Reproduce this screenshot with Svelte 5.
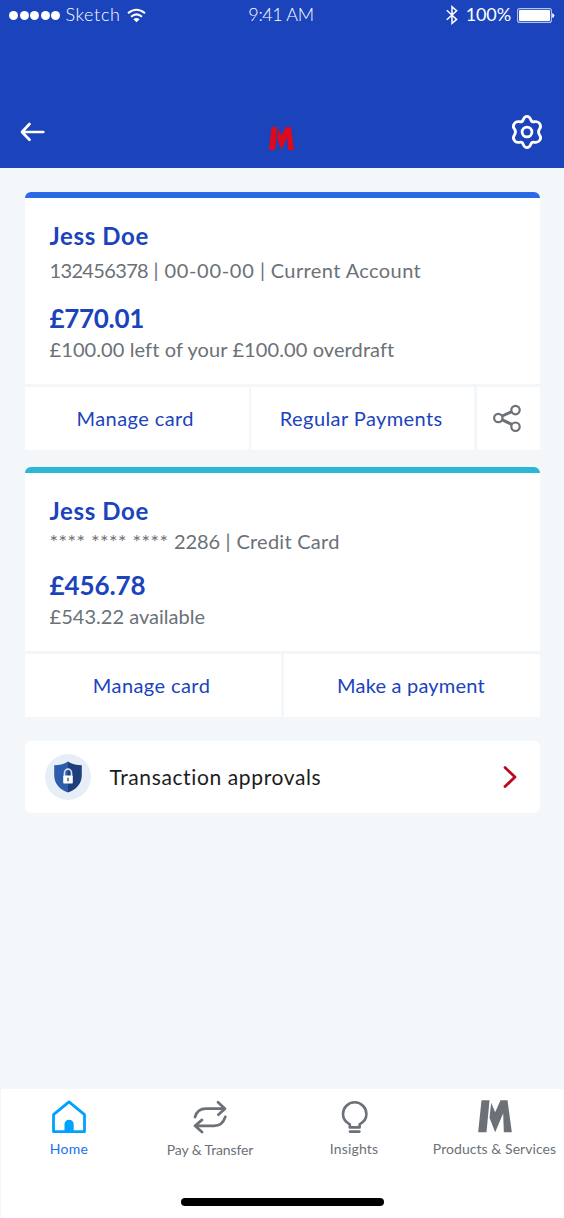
<script>
  const accounts = [
    {
      kind: 'current',
      name: 'Jess Doe',
      number: '132456378',
      sortCode: '00-00-00',
      product: 'Current Account',
      balance: '£770.01',
      note: '£100.00 left of your £100.00 overdraft',
      actions: ['Manage card', 'Regular Payments'],
      share: true
    },
    {
      kind: 'credit',
      name: 'Jess Doe',
      masked: '**** **** **** ',
      number: '2286',
      product: 'Credit Card',
      balance: '£456.78',
      note: '£543.22 available',
      actions: ['Manage card', 'Make a payment'],
      share: false
    }
  ];
</script>

<div class="screen">
  <header>
    <div class="status">
      <div class="carrier">
        <div class="dots">
          {#each [1, 2, 3, 4, 5] as dot (dot)}<i></i>{/each}
        </div>
        <span class="network">Sketch</span>
        <svg class="wifi" width="19" height="15" viewBox="0 0 19 15" fill="none" stroke="#fff" stroke-width="2">
          <path d="M1 5.2Q9.5-1.8 18 5.2" />
          <path d="M4 8.7Q9.5 4.1 15 8.7" />
          <path d="M6.4 11.2Q9.5 8.6 12.6 11.2L9.5 14.3Z" fill="#fff" stroke="none" />
        </svg>
      </div>
      <span class="time">9:41 AM</span>
      <div class="power">
        <svg width="12" height="20" viewBox="0 0 12 20" fill="none" stroke="#fff" stroke-width="1.5">
          <path d="M.8 5.3 10.6 14.4 6 18.3V1.7L10.6 5.8.8 14.8" />
        </svg>
        <span class="percent">100%</span>
        <svg class="battery" width="38" height="15" viewBox="0 0 38 15">
          <rect x=".6" y=".6" width="33.8" height="13.8" rx="2" fill="none" stroke="#b5c2ec" stroke-width="1.1" />
          <rect x="2" y="2" width="31" height="11" rx=".8" fill="#fff" />
          <path d="M35.2 5Q37.4 6 37.4 7.5T35.2 10Z" fill="#fff" />
        </svg>
      </div>
    </div>
    <div class="toolbar">
      <svg class="back" width="25" height="20" viewBox="0 0 25 20" fill="none" stroke="#fff" stroke-width="2.7" stroke-linecap="round" stroke-linejoin="round">
        <path d="M9.5 2 2 10l7.5 7.8M2.5 10h20.8" />
      </svg>
      <svg class="logo" width="25" height="23" viewBox="0 0 101 95" preserveAspectRatio="none" fill="#dc0a1b">
        <path d="M10 0H34L25 95H0ZM39 7 51 36 67 0H89L101 95H77L73 41 51 95 33 52Z" />
      </svg>
      <svg class="gear" width="34" height="36" viewBox="0 0 34 36" fill="none" stroke="#fff" stroke-width="2.8" stroke-linejoin="round">
        <path d="M13.3 5.5C14.2 3.3 15.2 2.3 17 2.3S19.8 3.3 20.7 5.5C21.3 7.4 22.7 8.2 24.7 7.7C27 7.3 28.5 7.8 29.6 9.5S31.2 13 29.6 14.9C28.4 16.4 28.4 19.2 29.6 21.1C31.2 23 30.9 24.8 29.6 26.5S27 28.7 24.7 28.3C22.7 27.8 21.3 28.6 20.7 30.5C19.8 32.7 18.8 33.7 17 33.7S14.2 32.7 13.3 30.5C12.7 28.6 11.3 27.8 9.3 28.3C7 28.7 5.5 28.2 4.4 26.5S2.8 23 4.4 21.1C5.6 19.2 5.6 16.4 4.4 14.9C2.8 13 3.1 11.2 4.4 9.5S7 7.3 9.3 7.7C11.3 8.2 12.7 7.4 13.3 5.5Z" />
        <circle cx="17" cy="18" r="4.9" />
      </svg>
    </div>
  </header>

  <main>
    {#each accounts as account (account.kind)}
      <section class="account {account.kind}">
        <div class="summary">
          <div class="name">{account.name}</div>
          <div class="details">{#if account.masked}<span class="masked">{account.masked}</span>{/if}<span class="number">{account.number}</span>{' | '}{#if account.sortCode}<span class="sort">{account.sortCode}</span>{' | '}{/if}<span class="product">{account.product}</span></div>
          <div class="balance">{account.balance}</div>
          <div class="note">{account.note}</div>
        </div>
        <div class="actions">
          {#each account.actions as action (action)}
            <button>{action}</button>
          {/each}
          {#if account.share}
            <button class="share" aria-label="Share">
              <svg width="28" height="28" viewBox="0 0 28 28" fill="none" stroke="#6b7177" stroke-width="2.2">
                <path d="M9.3 12 18.8 7.6M9.3 15.8 18.8 20.4" stroke-width="3" />
                <circle cx="5.3" cy="14" r="4.2" />
                <circle cx="22.5" cy="6.1" r="4.2" />
                <circle cx="22.5" cy="22.7" r="4.2" />
              </svg>
            </button>
          {/if}
        </div>
      </section>
    {/each}

    <div class="approvals">
      <span class="badge">
        <svg width="28" height="32" viewBox="0 0 28 32">
          <path d="M14 .5C10 3.2 5.5 4.2.2 4.2V14C.2 22.5 5.5 28.5 14 31.5Z" fill="#2e5cac" />
          <path d="M14 .5C18 3.2 22.5 4.2 27.8 4.2V14C27.8 22.5 22.5 28.5 14 31.5Z" fill="#1e3f7b" />
          <path d="M10.5 15V11.7a3.5 3.5 0 0 1 7 0V15" fill="none" stroke="#d8e1f2" stroke-width="1.7" />
          <rect x="9.2" y="14.5" width="9.6" height="8" rx=".8" fill="#fff" />
          <path d="M14 16.7V20.2" stroke="#6b7177" stroke-width="1.7" />
        </svg>
      </span>
      <span class="label">Transaction approvals</span>
      <svg width="14" height="24" viewBox="0 0 14 24" fill="none" stroke="#bb0a1e" stroke-width="2.8" stroke-linecap="round" stroke-linejoin="round">
        <path d="M2 2.6 12 12 2 21.6" />
      </svg>
    </div>
  </main>

  <nav>
    <div class="tabs">
      <div class="tab home">
        <svg width="36" height="34" viewBox="0 0 36 34" fill="none" stroke="#00a2ff" stroke-width="2.8">
          <path d="M2.5 31.7V14.6L18 1.9 33.5 14.6V31.7Z" stroke-linejoin="round" />
          <path d="M13.5 32V24.3a4.6 4.6 0 0 1 9.2 0V32Z" fill="#00a2ff" stroke="none" />
        </svg>
        <span>Home</span>
      </div>
      <div class="tab pay">
        <svg width="36" height="34" viewBox="0 0 36 34" fill="none" stroke="#6b7177" stroke-width="2.7" stroke-linecap="round" stroke-linejoin="round">
          <path d="M3 17.2C4.5 11.5 8.5 8.7 14 8.7H32.5M26 2.2 33 8.7 26.3 14.7" />
          <path d="M33.3 16.8C31.5 22.5 27.8 25.8 22 25.8H3.7M10 19.9 3 25.8 10 32.1" />
        </svg>
        <span>Pay &amp; Transfer</span>
      </div>
      <div class="tab insights">
        <svg width="28" height="34" viewBox="0 0 28 34" fill="none" stroke="#6b7177" stroke-width="2.6">
          <path d="M9.8 27.4V24.3C5.8 22.2 3 18.7 3 14a11.7 11.7 0 0 1 23.4 0C26.4 18.7 23.6 22.2 19.6 24.3V27.4Z" stroke-linejoin="round" />
          <path d="M10 31.6H19.4" stroke-width="2.6" stroke-linecap="round" />
        </svg>
        <span>Insights</span>
      </div>
      <div class="tab products">
        <svg width="34" height="34" viewBox="0 0 101 102" fill="#6b7177">
          <path d="M10 1H34L25 97H0ZM39 8 51 37 67 1H88L101 97H77L75 40 51 97 34 53Z" />
        </svg>
        <span>Products &amp; Services</span>
      </div>
    </div>
    <div class="indicator"></div>
  </nav>
</div>

<style>
  :global(body) {
    background: #f3f7fa;
  }
  .screen {
    width: 564px;
    height: 1218px;
    display: flex;
    flex-direction: column;
    overflow: hidden;
    background: #f3f7fa;
    font-family: Lato, "Open Sans", sans-serif;
    color: #6b7177;
  }
  svg {
    display: block;
    flex: none;
  }
  header {
    height: 168px;
    flex: none;
    background: #1a43bc;
    color: #fff;
  }
  .status {
    display: grid;
    grid-template-columns: 1fr auto 1fr;
    align-items: center;
    height: 30px;
    padding: 0 9px;
    font-size: 18px;
    font-weight: 300;
    line-height: 28px;
  }
  .status span {
    padding-bottom: 2px;
  }
  .carrier, .power, .dots {
    display: flex;
    align-items: center;
  }
  .dots {
    gap: 1.6px;
    margin-right: 5px;
  }
  .dots i {
    width: 9px;
    height: 9px;
    border-radius: 50%;
    background: #fff;
  }
  .network {
    letter-spacing: 0.65px;
  }
  .wifi {
    margin-left: 6px;
  }
  .time {
    letter-spacing: -0.4px;
    margin-right: 2px;
  }
  .power {
    justify-content: flex-end;
  }
  .percent {
    margin: 0 6px 0 8px;
    font-weight: 400;
    letter-spacing: -0.1px;
  }
  .toolbar {
    display: grid;
    grid-template-columns: 1fr auto 1fr;
    align-items: center;
    height: 36px;
    margin-top: 84px;
    padding: 0 20.5px 0 19.5px;
  }
  .logo {
    margin-top: 13px;
  }
  .gear {
    justify-self: end;
  }
  main {
    flex: 1;
    display: flex;
    flex-direction: column;
    padding: 24px 24px 0 25px;
  }
  .account {
    margin-bottom: 16.5px;
  }
  .summary {
    display: flex;
    flex-direction: column;
    background: #fff;
    border-top: 6px solid #2b6ae6;
    border-radius: 6px 6px 0 0;
    height: 192px;
    box-sizing: border-box;
    padding: 23px 25px 0 24.5px;
    white-space: pre;
  }
  .name {
    font-size: 24px;
    font-weight: 700;
    line-height: 30px;
    letter-spacing: 0.64px;
    color: #1a43bc;
  }
  .details {
    margin-top: 7px;
    font-size: 20px;
    line-height: 24px;
    letter-spacing: 0.35px;
  }
  .masked {
    letter-spacing: 0.48px;
  }
  .number {
    letter-spacing: -0.65px;
  }
  .credit .number {
    letter-spacing: -0.1px;
  }
  .sort {
    letter-spacing: 0.7px;
  }
  .product {
    letter-spacing: 0.4px;
  }
  .credit .product {
    letter-spacing: 0.26px;
  }
  .balance {
    margin-top: 21px;
    font-size: 26px;
    font-weight: 700;
    line-height: 30px;
    letter-spacing: -0.3px;
    color: #1a43bc;
  }
  .note {
    margin-top: 4px;
    font-size: 20px;
    line-height: 24px;
    letter-spacing: 0.1px;
  }
  .credit .summary {
    border-top-color: #2bb8d4;
    height: 184.5px;
  }
  .credit .details {
    margin-top: 3.5px;
  }
  .credit .balance {
    margin-top: 17px;
    letter-spacing: -0.1px;
  }
  .credit .note {
    letter-spacing: 0.03px;
  }
  .actions {
    display: grid;
    grid-template-columns: 223.5px 1fr 63px;
    gap: 2.7px;
    height: 63px;
    margin-top: 3px;
  }
  .credit .actions {
    grid-template-columns: 1fr 1fr;
  }
  .credit {
    margin-bottom: 24px;
  }
  button {
    display: flex;
    align-items: center;
    justify-content: center;
    padding: 0 3px 1px 0;
    border: 0;
    background: #fff;
    color: #1a43bc;
    font: 400 20px/24px Lato, "Open Sans", sans-serif;
    letter-spacing: 0.42px;
  }
  .credit button:last-child {
    padding-right: 2px;
    letter-spacing: 0.2px;
  }
  .share {
    padding: 0 4px 1px 0;
  }
  .approvals {
    display: flex;
    align-items: center;
    height: 72px;
    box-sizing: border-box;
    padding: 0 23px 0 20px;
    border-radius: 6px;
    background: #fff;
  }
  .badge {
    display: flex;
    align-items: center;
    justify-content: center;
    width: 46px;
    height: 46px;
    border-radius: 50%;
    background: #e8eef8;
  }
  .label {
    flex: 1;
    margin-left: 18.5px;
    font-size: 21px;
    line-height: 26px;
    letter-spacing: 0.62px;
    color: #1c1c1c;
  }
  nav {
    height: 129px;
    flex: none;
    box-sizing: border-box;
    margin-left: 1px;
    padding-top: 11px;
    background: #fff;
  }
  .tabs {
    display: grid;
    grid-template-columns: 136px 146px 142px 139px;
    height: 97.5px;
  }
  .tab {
    display: flex;
    flex-direction: column;
    align-items: center;
    font-size: 14px;
    line-height: 18px;
    white-space: nowrap;
  }
  .tab span {
    margin-top: 6px;
  }
  .home {
    color: #1a6ff0;
    letter-spacing: 0.3px;
  }
  .pay {
    letter-spacing: -0.12px;
  }
  .pay span {
    margin-top: 7px;
  }
  .insights {
    letter-spacing: 0.17px;
  }
  .products {
    letter-spacing: 0.06px;
  }
  .indicator {
    width: 203px;
    height: 8.5px;
    margin-left: 180px;
    border-radius: 5px;
    background: #000;
  }
</style>
